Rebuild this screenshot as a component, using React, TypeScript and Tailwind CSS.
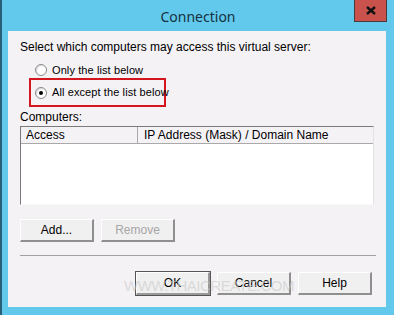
import { useState } from "react"

const ui = { fontFamily: '"Liberation Sans", Arial, sans-serif' }

function Radio({ checked, label, onClick }: { checked: boolean; label: string; onClick: () => void }) {
  return (
    <label className="flex items-center gap-[5px] h-[16px] whitespace-nowrap cursor-default" onClick={onClick}>
      <span className="w-[12px] h-[12px] rounded-full border border-[#8a8a8a] bg-white flex items-center justify-center shadow-[inset_1px_1px_1px_rgba(0,0,0,0.15)]">
        {checked && <span className="w-[4px] h-[4px] rounded-full bg-black" />}
      </span>
      <span className="text-[11px] tracking-[0.1px]">{label}</span>
    </label>
  )
}

function Btn({ children, disabled, primary }: { children: string; disabled?: boolean; primary?: boolean }) {
  return (
    <button
      className={
        "w-[74px] h-[23px] bg-[#f1f0f1] border-t border-l border-t-white border-l-white border-r-2 border-b-2 " +
        (primary
          ? "outline outline-1 outline-[#555] border-r-[#999] border-b-[#999]"
          : "border-r-[#8f8f8f] border-b-[#8f8f8f]") +
        (disabled ? " text-[#a6a6a6]" : " text-black")
      }
    >
      {children}
    </button>
  )
}

export default function App() {
  const [mode, setMode] = useState<"only" | "except">("except")

  return (
    <div className="w-[394px] h-[315px] bg-[#62c9ec] border-l-2 border-l-[#2a5f79] relative overflow-hidden" style={ui}>
      <div className="h-[31px] flex items-center justify-center relative">
        <span className="text-[14px] text-[#16313f] mt-[2px]" style={{ fontFamily: '"Noto Sans", "Open Sans", sans-serif' }}>
          Connection
        </span>
        <div className="absolute right-[7px] top-0 w-[33px] h-[22px] bg-[#c9534c] border border-[#4a3a3a] border-t-0 flex items-center justify-center">
          <svg width="10" height="9" viewBox="0 0 10 9">
            <path d="M1 1 L9 8 M9 1 L1 8" stroke="#111" strokeWidth="2.4" />
          </svg>
        </div>
      </div>

      <div className="ml-[6px] w-[378px] h-[276px] bg-[#f5f2f6] text-[12px] text-black px-[12px] pt-[9px]">
        <div className="h-[14px] leading-[14px]">Select which computers may access this virtual server:</div>

        <div className="ml-[15px] mt-[8px]">
          <Radio checked={mode === "only"} label="Only the list below" onClick={() => setMode("only")} />
        </div>
        <div className="ml-[9px] w-[137px] h-[29px] border-2 border-[#d3161d] flex items-center pl-[4px]">
          <Radio checked={mode === "except"} label="All except the list below" onClick={() => setMode("except")} />
        </div>

        <div className="mt-[3px] h-[14px] leading-[14px]">Computers:</div>

        <div className="mt-[2px] w-[354px] h-[79px] bg-white border border-t-[#7a7a7a] border-l-[#7a7a7a] border-r-[#e3e3e3] border-b-[#f8f8f8]">
          <div className="flex h-[17px] bg-[#f5f2f6] border-b border-[#a9a9a9]">
            <div className="w-[117px] border-r border-[#a9a9a9] pl-[5px] leading-[16px]">Access</div>
            <div className="pl-[6px] leading-[16px]">IP Address (Mask) / Domain Name</div>
          </div>
        </div>

        <div className="mt-[14px] flex gap-[7px]">
          <Btn>Add...</Btn>
          <Btn disabled>Remove</Btn>
        </div>

        <div className="mt-[13px] w-[356px] h-[1px] bg-[#a0a0a0]" />

        <div className="mt-[16px] flex justify-end gap-[7px] pr-[2px]">
          <Btn primary>OK</Btn>
          <Btn>Cancel</Btn>
          <Btn>Help</Btn>
        </div>
      </div>

      <div className="absolute left-[122px] top-[275px] text-[15px] tracking-[-0.5px] text-[#c8c8c8]/60 pointer-events-none">
        WWW.THAICREATE.COM
      </div>
    </div>
  )
}
